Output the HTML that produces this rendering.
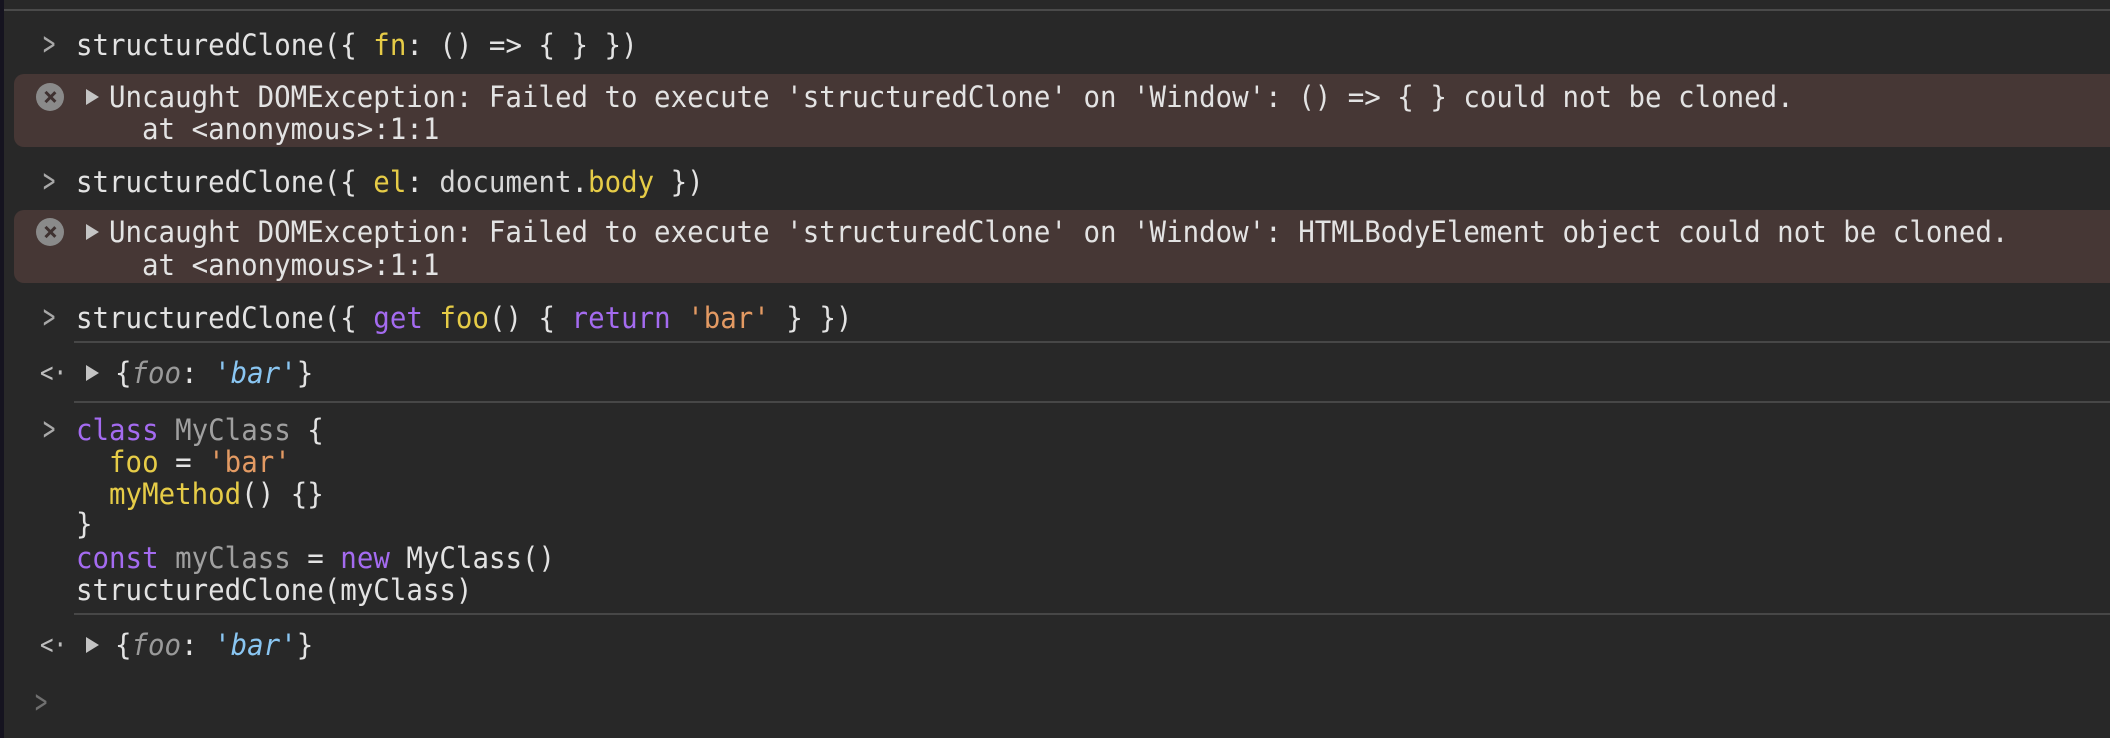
<!DOCTYPE html>
<html><head><meta charset="utf-8"><style>
html,body{margin:0;padding:0;}
body{width:2110px;height:738px;background:#282828;position:relative;overflow:hidden;font-family:"DejaVu Sans Mono","Liberation Mono",monospace;font-size:29px;color:#e3e3e3;}
.strip{position:absolute;left:0;top:0;width:4px;height:738px;background:#15131f;}
.topline{position:absolute;left:4px;right:0;top:9px;height:2px;background:#4a4a4a;}
.err{position:absolute;left:14px;right:0;background:#463735;border-radius:10px 0 0 10px;}
.l{position:absolute;left:76px;height:32px;line-height:32px;white-space:pre;transform:scaleX(0.946);transform-origin:0 0;}
.p{position:absolute;left:43px;height:32px;line-height:32px;color:#a8a8a8;font-size:34px;transform:scaleX(0.6);transform-origin:0 0;}
.sep{position:absolute;left:74px;right:0;height:2px;background:#474747;}
.tri{position:absolute;left:86px;width:0;height:0;border-top:8px solid transparent;border-bottom:8px solid transparent;border-left:13px solid #c4c4c4;}
.ic{position:absolute;left:36px;width:28px;height:28px;border-radius:50%;background:#8a8a8a;}
.ic:before,.ic:after{content:"";position:absolute;left:13px;top:7px;width:2.5px;height:14px;background:#3e3130;}
.ic:before{transform:rotate(45deg);}.ic:after{transform:rotate(-45deg);}
.y{color:#e6cc47}.pu{color:#a46bf0}.o{color:#e39a63}.g{color:#a0a0a0}.b{color:#8ac6f2;font-style:italic}.gi{color:#9a9a9a;font-style:italic}
.r{position:absolute;left:40px;height:32px;line-height:32px;color:#bdbdbd;font-size:28px;transform:scaleX(0.8);transform-origin:0 0;}
</style></head><body>
<div class="strip"></div>
<div class="topline"></div>

<div class="p" style="top:28px">&gt;</div>
<div class="l" style="top:29px">structuredClone({ <span class="y">fn</span>: () =&gt; { } })</div>

<div class="err" style="top:74px;height:73px"></div>
<div class="ic" style="top:83px"></div>
<div class="tri" style="top:89px"></div>
<div class="l" style="top:81px;left:109px">Uncaught DOMException: Failed to execute 'structuredClone' on 'Window': () =&gt; { } could not be cloned.</div>
<div class="l" style="top:113px;left:109px">  at &lt;anonymous&gt;:1:1</div>

<div class="p" style="top:165px">&gt;</div>
<div class="l" style="top:166px">structuredClone({ <span class="y">el</span>: <span style="color:#d8d8d8">document</span>.<span class="y">body</span> })</div>

<div class="err" style="top:210px;height:73px"></div>
<div class="ic" style="top:218px"></div>
<div class="tri" style="top:224px"></div>
<div class="l" style="top:216px;left:109px">Uncaught DOMException: Failed to execute 'structuredClone' on 'Window': HTMLBodyElement object could not be cloned.</div>
<div class="l" style="top:249px;left:109px">  at &lt;anonymous&gt;:1:1</div>

<div class="p" style="top:301px">&gt;</div>
<div class="l" style="top:302px">structuredClone({ <span class="pu">get</span> <span class="y">foo</span>() { <span class="pu">return</span> <span class="o">'bar'</span> } })</div>
<div class="sep" style="top:341px"></div>

<div class="r" style="top:357px">&lt;·</div>
<div class="tri" style="top:365px"></div>
<div class="l" style="top:357px;left:115px">{<span class="gi">foo</span>: <span class="b">'bar'</span>}</div>
<div class="sep" style="top:401px"></div>

<div class="p" style="top:413px">&gt;</div>
<div class="l" style="top:414px"><span class="pu">class</span> <span class="g">MyClass</span> {</div>
<div class="l" style="top:446px">  <span class="y">foo</span> = <span class="o">'bar'</span></div>
<div class="l" style="top:478px">  <span class="y">myMethod</span>() {}</div>
<div class="l" style="top:508px">}</div>
<div class="l" style="top:542px"><span class="pu">const</span> <span class="g">myClass</span> = <span class="pu">new</span> MyClass()</div>
<div class="l" style="top:574px">structuredClone(myClass)</div>
<div class="sep" style="top:613px"></div>

<div class="r" style="top:629px">&lt;·</div>
<div class="tri" style="top:637px"></div>
<div class="l" style="top:629px;left:115px">{<span class="gi">foo</span>: <span class="b">'bar'</span>}</div>

<div class="p" style="top:686px;left:35px;color:#707070">&gt;</div>
</body></html>
